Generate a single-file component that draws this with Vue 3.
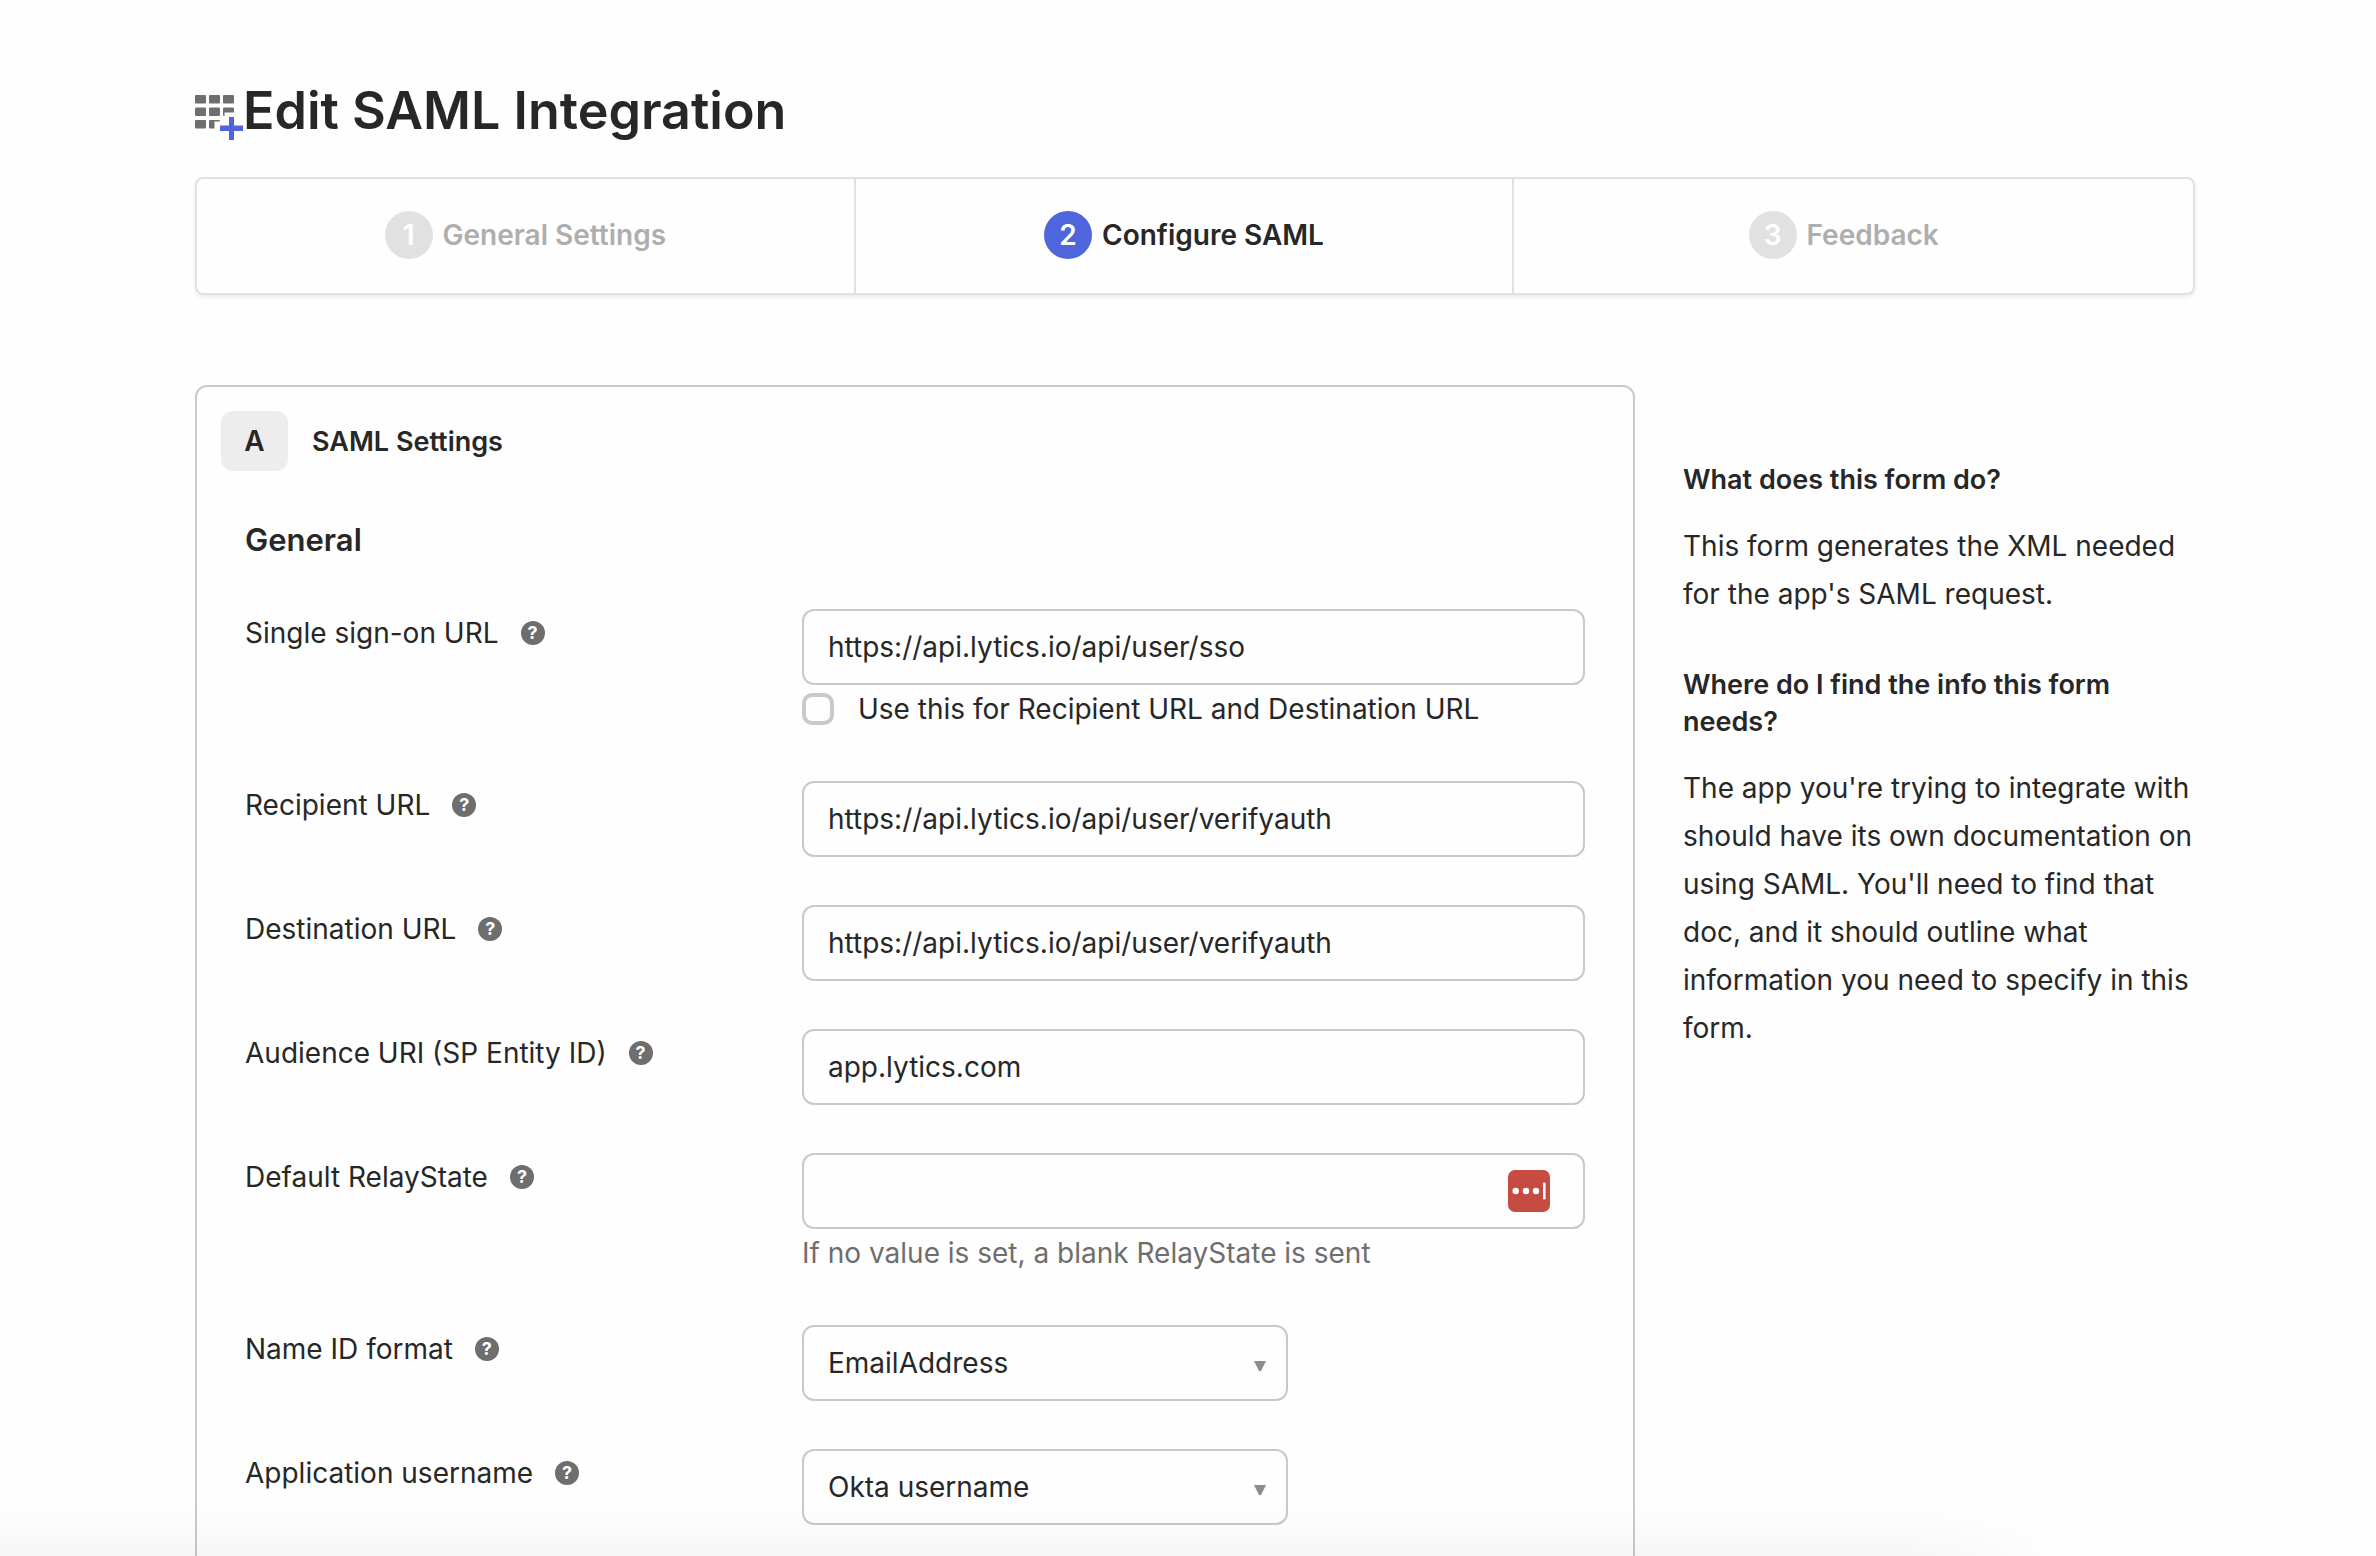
<script setup>
import { ref } from 'vue'

const steps = [
  { number: 1, title: 'General Settings' },
  { number: 2, title: 'Configure SAML' },
  { number: 3, title: 'Feedback' },
]
const currentStep = 2

const useForAll = ref(false)

const fields = ref([
  { id: 'sso-url', label: 'Single sign-on URL', type: 'text', value: 'https://api.lytics.io/api/user/sso', reuse: true },
  { id: 'recipient-url', label: 'Recipient URL', type: 'text', value: 'https://api.lytics.io/api/user/verifyauth' },
  { id: 'destination-url', label: 'Destination URL', type: 'text', value: 'https://api.lytics.io/api/user/verifyauth' },
  { id: 'audience-uri', label: 'Audience URI (SP Entity ID)', type: 'text', value: 'app.lytics.com' },
  { id: 'relay-state', label: 'Default RelayState', type: 'text', value: '', autofill: true, hint: 'If no value is set, a blank RelayState is sent' },
  { id: 'name-id-format', label: 'Name ID format', type: 'select', value: 'EmailAddress' },
  { id: 'app-username', label: 'Application username', type: 'select', value: 'Okta username' },
])
</script>

<template>
  <div class="page">
    <header class="page-header">
      <svg class="app-icon" viewBox="0 0 48 58" aria-hidden="true">
        <g fill="#6e6e6e">
          <rect x="0" y="13" width="11" height="8.5" rx="1" />
          <rect x="14" y="13" width="11" height="8.5" rx="1" />
          <rect x="28" y="13" width="11" height="8.5" rx="1" />
          <rect x="0" y="25.5" width="11" height="8.5" rx="1" />
          <rect x="14" y="25.5" width="11" height="8.5" rx="1" />
          <rect x="28" y="25.5" width="11" height="8.5" rx="1" />
          <rect x="0" y="38" width="11" height="8.5" rx="1" />
          <rect x="14" y="38" width="11" height="8.5" rx="1" />
        </g>
        <path fill="#fefefe" d="M29.5 30.5H43V58H19.5V39.5h10z" />
        <path fill="#4f65dc" d="M34 35h5v8.5h9v5.5h-9v9h-5v-9h-9v-5.5h9z" />
      </svg>
      <h1>Edit SAML Integration</h1>
    </header>

    <ol class="steps">
      <li v-for="step in steps" :key="step.number" class="step" :class="{ current: step.number === currentStep }">
        <span class="step-number">{{ step.number }}</span>
        <span>{{ step.title }}</span>
      </li>
    </ol>

    <div class="columns">
      <form class="card" @submit.prevent>
        <div class="card-header">
          <span class="badge">A</span>
          <h2>SAML Settings</h2>
        </div>
        <div class="card-body">
          <h3>General</h3>
          <div v-for="field in fields" :key="field.id" class="row">
            <div class="row-label">
              <label :for="field.id">{{ field.label }}</label>
              <button type="button" class="help" :aria-label="'Help: ' + field.label">?</button>
            </div>
            <div class="row-field">
              <div v-if="field.type === 'select'" class="select-box">
                <select :id="field.id" v-model="field.value">
                  <option>{{ field.value }}</option>
                </select>
                <svg class="arrow" viewBox="0 0 12 10" aria-hidden="true"><path fill="#8c8c8c" d="M0 0h12l-5 10h-2z" /></svg>
              </div>
              <div v-else class="input-box">
                <input :id="field.id" v-model="field.value" type="text" />
                <svg v-if="field.autofill" class="autofill" viewBox="0 0 42 42" aria-hidden="true">
                  <rect width="42" height="42" rx="7" fill="#c64b40" />
                  <g fill="#fff">
                    <circle cx="7.7" cy="21" r="3.2" />
                    <circle cx="18" cy="21" r="3.2" />
                    <circle cx="28" cy="21" r="3.2" />
                    <rect x="35" y="12.5" width="2.6" height="17" rx="1" />
                  </g>
                </svg>
              </div>
              <label v-if="field.reuse" class="check">
                <input v-model="useForAll" type="checkbox" />
                <span>Use this for Recipient URL and Destination URL</span>
              </label>
              <p v-if="field.hint" class="hint">{{ field.hint }}</p>
            </div>
          </div>
        </div>
      </form>

      <aside class="about">
        <h4>What does this form do?</h4>
        <p>This form generates the XML needed for the app's SAML request.</p>
        <h4>Where do I find the info this form needs?</h4>
        <p>
          The app you're trying to integrate with should have its own documentation on using SAML.
          You'll need to find that doc, and it should outline what information you need to specify in this form.
        </p>
      </aside>
    </div>

    <div class="scroll-shade" aria-hidden="true"></div>
  </div>
</template>

<style>
body {
  background: #fefefe;
}
</style>

<style scoped>
.page {
  box-sizing: border-box;
  height: 100vh;
  overflow: hidden;
  padding: 75px 181px 0 195px;
  font-family: Inter, "Liberation Sans", sans-serif;
  font-size: 28px;
  line-height: 48px;
  color: #272727;
}
.page *,
.page *::before {
  box-sizing: border-box;
}
h1,
h2,
h3,
h4,
p,
ol {
  margin: 0;
  padding: 0;
}
.page-header {
  display: flex;
  align-items: center;
  height: 72px;
  margin-bottom: 30px;
}
.app-icon {
  flex: none;
  width: 48px;
  height: 58px;
}
h1 {
  font-size: 52px;
  line-height: 72px;
  font-weight: 600;
  white-space: nowrap;
}
.steps {
  display: flex;
  height: 118px;
  list-style: none;
  border: 2px solid #e1e1e1;
  border-radius: 8px;
  box-shadow: 0 2px 4px rgba(0, 0, 0, 0.08);
}
.step {
  flex: 0 0 33%;
  display: flex;
  align-items: center;
  justify-content: center;
  gap: 10px;
  padding-bottom: 2px;
  font-weight: 600;
  color: #aeaeae;
}
.step:not(:last-child) {
  border-right: 2px solid #e1e1e1;
}
.step-number {
  width: 48px;
  height: 48px;
  border-radius: 50%;
  background: #e1e1e1;
  color: #fff;
  text-align: center;
}
.step.current {
  color: #272727;
}
.current .step-number {
  background: #4f65dc;
}
.columns {
  display: grid;
  grid-template-columns: minmax(0, 1fr) 512px;
  align-items: start;
  gap: 48px;
  margin-top: 90px;
}
.card {
  padding: 24px;
  border: 2px solid #c9c9c9;
  border-radius: 12px;
}
.card-header {
  display: flex;
  align-items: center;
  gap: 24px;
}
.badge {
  width: 67px;
  height: 60px;
  border-radius: 12px;
  background: #ededed;
  font-weight: 600;
  line-height: 60px;
  text-align: center;
}
h2,
h4 {
  font-size: 27px;
  line-height: 37px;
  font-weight: 600;
}
.card-body {
  padding: 48px 24px 0;
}
h3 {
  margin-bottom: 48px;
  font-size: 31px;
  line-height: 42px;
  font-weight: 600;
}
.row {
  display: grid;
  grid-template-columns: 557px minmax(0, 1fr);
  margin-bottom: 48px;
}
.row-label {
  display: flex;
  align-items: center;
  gap: 22px;
  height: 48px;
}
.help {
  width: 24px;
  height: 24px;
  padding: 0;
  border: 0;
  border-radius: 50%;
  background: #6e6e6e;
  color: #fff;
  font: 700 18px/24px Inter, sans-serif;
}
.input-box,
.select-box {
  position: relative;
  display: flex;
}
.select-box {
  width: 486px;
}
.input-box input,
select {
  width: 100%;
  height: 76px;
  padding: 0 24px;
  border: 2px solid #c9c9c9;
  border-radius: 12px;
  background: #fefefe;
  color: #272727;
  font: inherit;
  appearance: none;
}
.arrow {
  position: absolute;
  right: 22px;
  top: 36px;
  width: 12px;
  height: 10px;
  pointer-events: none;
}
.autofill {
  position: absolute;
  right: 35px;
  top: 17px;
  width: 42px;
  height: 42px;
}
.check {
  display: flex;
  align-items: center;
  gap: 24px;
}
.check input {
  width: 32px;
  height: 32px;
  margin: 0;
  border: 4px solid #c9c9c9;
  border-radius: 10px;
  appearance: none;
}
.check input:checked {
  background: #4f65dc;
}
.hint {
  color: #6e6e6e;
}
.about {
  padding-top: 76px;
}
.about p {
  margin: 24px 0 48px;
}
.scroll-shade {
  position: fixed;
  left: 0;
  bottom: 0;
  width: 87%;
  height: 48px;
  background: linear-gradient(to bottom, rgba(0, 0, 0, 0), rgba(0, 0, 0, 0.03));
  mask-image: linear-gradient(to right, #000 92%, transparent);
  pointer-events: none;
}
</style>
